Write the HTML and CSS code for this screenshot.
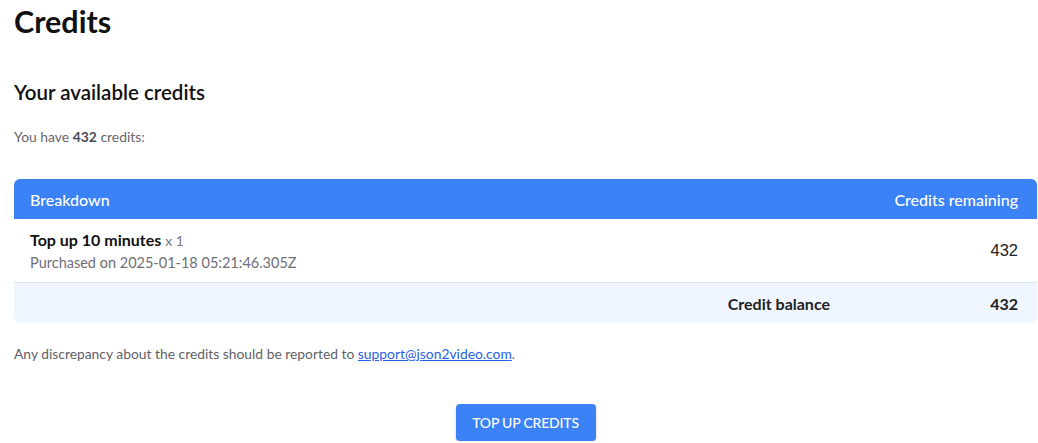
FILE: index.html
```html
<!DOCTYPE html>
<html lang="en">
  <head>
    <meta charset="UTF-8" />
    <title>Credits</title>
    <meta name="viewport" content="width=device-width, initial-scale=1.0" />
    <link rel="stylesheet" href="styles.css">
  </head>

  <body>
    <main class="page">
      <h1>Credits</h1>

      <h2>Your available credits</h2>
      <p class="summary">You have <strong>432</strong> credits:</p>

      <div class="credits-table">
        <div class="row head">
          <span>Breakdown</span>
          <span>Credits remaining</span>
        </div>
        <div class="row item">
          <div class="item-info">
            <div class="item-title">Top up 10 minutes <span class="qty">x 1</span></div>
            <div class="item-date">Purchased on 2025-01-18 05:21:46.305Z</div>
          </div>
          <span class="amount">432</span>
        </div>
        <div class="row balance">
          <span class="balance-label">Credit balance</span>
          <span class="balance-value">432</span>
        </div>
      </div>

      <p class="note">
        Any discrepancy about the credits should be reported to
        <a href="mailto:support@json2video.com">support@json2video.com</a>.
      </p>

      <div class="actions">
        <button type="button">Top up credits</button>
      </div>
    </main>
  </body>
</html>
```

FILE: styles.css
```css
body {
  margin: 0;
  font-family: "Lato", "Open Sans", sans-serif;
  color: rgb(17, 17, 17);
  background-color: rgb(255, 255, 255);
}

.page {
  padding: 0 1px 0 14px;
}

h1 {
  font-size: 30.5px;
  font-weight: 700;
  line-height: 36px;
  margin: 0;
  padding-top: 3px;
}

h2 {
  font-size: 20.5px;
  font-weight: 600;
  line-height: 28px;
  margin: 39px 0 0;
}

.summary {
  font-size: 13.9px;
  color: rgb(102, 102, 110);
  margin: 22px 0 0;
  line-height: 18px;
}

.summary strong {
  color: rgb(75, 75, 85);
}

.credits-table {
  margin-top: 33px;
  border-radius: 6px;
  overflow: hidden;
}

.row {
  display: flex;
  align-items: center;
  justify-content: space-between;
  padding: 0 19px 0 16px;
}

.head {
  height: 40px;
  background-color: rgb(59, 130, 246);
  color: rgb(255, 255, 255);
  font-size: 16px;
  font-weight: 500;
}

.item {
  height: 63px;
  border-bottom: 1px solid rgb(222, 228, 238);
}

.item-title {
  font-size: 16px;
  font-weight: 700;
  color: rgb(17, 17, 17);
}

.qty {
  font-size: 14px;
  font-weight: 400;
  color: rgb(120, 120, 128);
}

.item-date {
  font-size: 14.5px;
  color: rgb(110, 110, 118);
  margin-top: 5px;
}

.amount {
  font-family: "Liberation Sans", Arial, sans-serif;
  font-size: 16.5px;
  color: rgb(34, 34, 34);
}

.balance {
  height: 40px;
  justify-content: flex-end;
  background-color: rgb(239, 246, 255);
  font-size: 16px;
  font-weight: 700;
  color: rgb(34, 34, 34);
}

.balance-value {
  width: 188px;
  text-align: right;
}

.note {
  font-size: 13.85px;
  color: rgb(95, 95, 104);
  margin: 22px 0 0;
  line-height: 18px;
}

.note a {
  color: rgb(37, 99, 235);
}

.actions {
  display: flex;
  justify-content: center;
  margin-top: 41px;
}

button {
  background-color: rgb(59, 130, 246);
  color: rgb(255, 255, 255);
  font-family: "Lato", sans-serif;
  font-size: 14px;
  font-weight: 500;
  text-transform: uppercase;
  letter-spacing: -0.2px;
  border: none;
  border-radius: 4px;
  width: 140px;
  height: 37px;
  box-shadow: 0 2px 3px rgba(0, 0, 0, 0.2);
  cursor: pointer;
}

button:hover {
  background-color: rgb(37, 99, 235);
}
```
